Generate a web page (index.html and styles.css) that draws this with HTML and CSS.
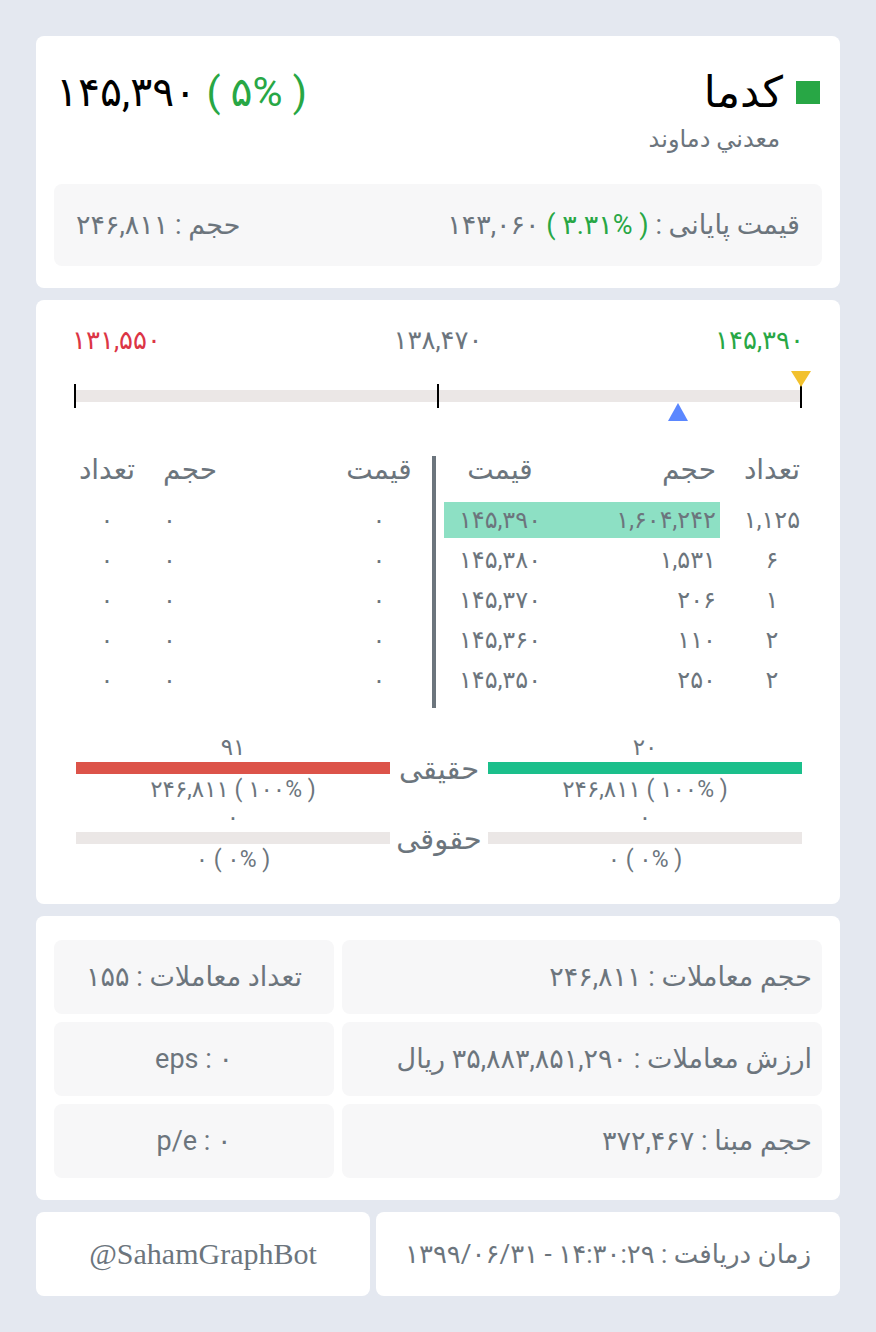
FILE: index.html
```html
<!DOCTYPE html>
<html lang="fa" dir="rtl">
<head>
    <meta charset="utf-8">
    <title>کدما</title>
    <link rel="stylesheet" href="styles.css">
</head>
<body>
    <div class="page">
        <!-- symbol header -->
        <section class="card head">
            <div class="head-top">
                <div class="name-block">
                    <div class="name"><span class="mark"></span>کدما</div>
                    <div class="company">معدني دماوند</div>
                </div>
                <div class="last-price ltr">۱۴۵,۳۹۰ <span class="up">( ۵% )</span></div>
            </div>
            <div class="summary">
                <div>قیمت پایانی : <span class="up ltr">( ۳.۳۱% )</span> ۱۴۳,۰۶۰</div>
                <div>حجم : ۲۴۶,۸۱۱</div>
            </div>
        </section>

        <!-- range, order book, real / legal -->
        <section class="card market">
            <div class="range">
                <div class="range-labels">
                    <span class="up">۱۴۵,۳۹۰</span>
                    <span>۱۳۸,۴۷۰</span>
                    <span class="down">۱۳۱,۵۵۰</span>
                </div>
                <div class="range-bar">
                    <span class="tick" style="right: 0%"></span>
                    <span class="tick" style="right: 50%"></span>
                    <span class="tick" style="right: 100%"></span>
                    <span class="marker last" style="right: 0%"></span>
                    <span class="marker close" style="right: 17%"></span>
                </div>
            </div>

            <div class="book">
                <div class="side buy">
                    <div class="row title"><span>تعداد</span><span>حجم</span><span>قیمت</span></div>
                    <div class="row"><span>۱,۱۲۵</span><span class="fill">۱,۶۰۴,۲۴۲</span><span class="fill">۱۴۵,۳۹۰</span></div>
                    <div class="row"><span>۶</span><span>۱,۵۳۱</span><span>۱۴۵,۳۸۰</span></div>
                    <div class="row"><span>۱</span><span>۲۰۶</span><span>۱۴۵,۳۷۰</span></div>
                    <div class="row"><span>۲</span><span>۱۱۰</span><span>۱۴۵,۳۶۰</span></div>
                    <div class="row"><span>۲</span><span>۲۵۰</span><span>۱۴۵,۳۵۰</span></div>
                </div>
                <div class="divider"></div>
                <div class="side sell">
                    <div class="row title"><span>قیمت</span><span>حجم</span><span>تعداد</span></div>
                    <div class="row"><span>۰</span><span>۰</span><span>۰</span></div>
                    <div class="row"><span>۰</span><span>۰</span><span>۰</span></div>
                    <div class="row"><span>۰</span><span>۰</span><span>۰</span></div>
                    <div class="row"><span>۰</span><span>۰</span><span>۰</span></div>
                    <div class="row"><span>۰</span><span>۰</span><span>۰</span></div>
                </div>
            </div>

            <div class="holders">
                <div class="holder">
                    <div class="count">۲۰</div>
                    <div class="hbar"><div class="hfill buy-fill" style="width: 100%"></div></div>
                    <div class="amount ltr">۲۴۶,۸۱۱ ( ۱۰۰% )</div>
                </div>
                <div class="hlabel">حقیقی</div>
                <div class="holder">
                    <div class="count">۹۱</div>
                    <div class="hbar"><div class="hfill sell-fill" style="width: 100%"></div></div>
                    <div class="amount ltr">۲۴۶,۸۱۱ ( ۱۰۰% )</div>
                </div>

                <div class="holder">
                    <div class="count">۰</div>
                    <div class="hbar"><div class="hfill buy-fill" style="width: 0%"></div></div>
                    <div class="amount ltr">۰ ( ۰% )</div>
                </div>
                <div class="hlabel">حقوقی</div>
                <div class="holder">
                    <div class="count">۰</div>
                    <div class="hbar"><div class="hfill sell-fill" style="width: 0%"></div></div>
                    <div class="amount ltr">۰ ( ۰% )</div>
                </div>
            </div>
        </section>

        <!-- trade stats -->
        <section class="card stats">
            <div class="stat wide">حجم معاملات : ۲۴۶,۸۱۱</div>
            <div class="stat">تعداد معاملات : ۱۵۵</div>
            <div class="stat wide">ارزش معاملات : ۳۵,۸۸۳,۸۵۱,۲۹۰ ریال</div>
            <div class="stat">eps : ۰</div>
            <div class="stat wide">حجم مبنا : ۳۷۲,۴۶۷</div>
            <div class="stat">p/e : ۰</div>
        </section>

        <div class="footer">
            <div class="card foot time">زمان دریافت : ۱۴:۳۰:۲۹ - ۱۳۹۹/۰۶/۳۱</div>
            <div class="card foot bot"><span class="ltr">@SahamGraphBot</span></div>
        </div>
    </div>
</body>
</html>
```

FILE: styles.css
```css
body {
    margin: 0;
    padding: 0;
    background-color: #e4e8f0;
    font-family: Roboto, "DejaVu Sans", sans-serif;
    color: #6c757d;
}

.page {
    padding: 36px;
    display: flex;
    flex-direction: column;
    gap: 12px;
}

.card {
    background-color: #fff;
    border-radius: 8px;
}

.ltr {
    direction: ltr;
    unicode-bidi: isolate;
}

.up {
    color: #28a745;
}

.down {
    color: #dc3545;
}

/* header card */
.head {
    padding: 30px 18px 22px 18px;
}

.head-top {
    display: flex;
    justify-content: space-between;
    align-items: flex-start;
    padding: 0 2px 0 2px;
}

.name {
    display: flex;
    align-items: center;
    gap: 13px;
    font-size: 43px;
    color: #000;
    line-height: 52px;
}

.mark {
    width: 24px;
    height: 23px;
    background-color: #28a745;
}

.company {
    margin-right: 40px;
    margin-top: 6px;
    font-size: 24px;
    line-height: 30px;
}

.last-price {
    font-size: 41px;
    line-height: 52px;
    color: #000;
}

.summary {
    margin-top: 30px;
    height: 82px;
    padding: 0 22px;
    background-color: #f7f7f8;
    border-radius: 8px;
    display: flex;
    align-items: center;
    justify-content: space-between;
    font-size: 27px;
}

/* price range */
.market {
    padding: 24px 28px 30px 28px;
}

.range {
    margin: 0 11px;
}

.range-labels {
    display: flex;
    justify-content: space-between;
    font-size: 26px;
    line-height: 32px;
    margin: 0 -3px;
}

.range-bar {
    position: relative;
    height: 12px;
    margin-top: 34px;
    margin-bottom: 48px;
    background-color: #ebe7e6;
}

.tick {
    position: absolute;
    top: -6px;
    width: 2px;
    height: 24px;
    margin-right: -1px;
    background-color: #000;
}

.marker {
    position: absolute;
    width: 0;
    height: 0;
    margin-right: -10px;
    border-left: 10px solid transparent;
    border-right: 10px solid transparent;
}

.marker.last {
    top: -19px;
    border-top: 16px solid #f2c12e;
}

.marker.close {
    top: 13px;
    border-bottom: 18px solid #5b87ff;
}

/* order book */
.book {
    display: flex;
    align-items: flex-start;
    gap: 8px;
}

.side {
    display: flex;
    flex-direction: column;
    gap: 4px;
}

.side.buy {
    width: 368px;
}

.side.sell {
    width: 360px;
}

.divider {
    width: 4px;
    height: 252px;
    margin-top: 6px;
    background-color: #6c757d;
}

.row {
    display: grid;
    height: 36px;
    align-items: center;
    font-size: 24px;
}

.row > span {
    height: 36px;
    line-height: 36px;
}

.row.title {
    font-size: 28px;
    height: 40px;
    margin-bottom: 8px;
}

.row.title > span {
    line-height: 40px;
    height: 40px;
}

.buy .row {
    grid-template-columns: 92px 164px 112px;
}

.buy .row > span:nth-child(1) {
    text-align: center;
    padding-left: 12px;
}

.buy .row > span:nth-child(2) {
    padding-right: 4px;
}

.buy .row > span:nth-child(3) {
    text-align: center;
}

.fill {
    background-color: #8de0c4;
}

.sell .row {
    grid-template-columns: 90px 184px 86px;
}

.sell .row > span:nth-child(1),
.sell .row > span:nth-child(3) {
    text-align: center;
}

.sell .row > span:nth-child(2) {
    text-align: left;
    padding-left: 13px;
}

/* real / legal holders */
.holders {
    margin: 29px 10px 0 14px;
    display: grid;
    grid-template-columns: 314px 98px 314px;
    row-gap: 3px;
}

.holder {
    text-align: center;
}

.count {
    font-size: 23px;
    line-height: 22px;
}

.hbar {
    height: 12px;
    margin-top: 3px;
    background-color: #ebe7e6;
}

.hfill {
    height: 12px;
}

.buy-fill {
    background-color: #1bbf8b;
}

.sell-fill {
    background-color: #dc5349;
}

.amount {
    font-size: 23px;
    line-height: 28px;
    margin-top: 2px;
}

.hlabel {
    text-align: center;
    font-size: 29px;
    line-height: 34px;
    padding-top: 15px;
}

/* stats */
.stats {
    padding: 24px 18px 22px 18px;
    display: grid;
    grid-template-columns: 480px 280px;
    gap: 8px;
}

.stat {
    height: 74px;
    display: flex;
    align-items: center;
    justify-content: center;
    background-color: #f7f7f8;
    border-radius: 8px;
    font-size: 27px;
}

.stat.wide {
    justify-content: flex-start;
    padding-right: 10px;
}

/* footer */
.footer {
    display: flex;
    gap: 6px;
}

.foot {
    height: 84px;
    display: flex;
    align-items: center;
    justify-content: center;
    font-size: 26px;
}

.foot.time {
    width: 464px;
}

.foot.bot {
    flex: 1;
    font-family: "Liberation Serif", serif;
    font-size: 30px;
}
```
